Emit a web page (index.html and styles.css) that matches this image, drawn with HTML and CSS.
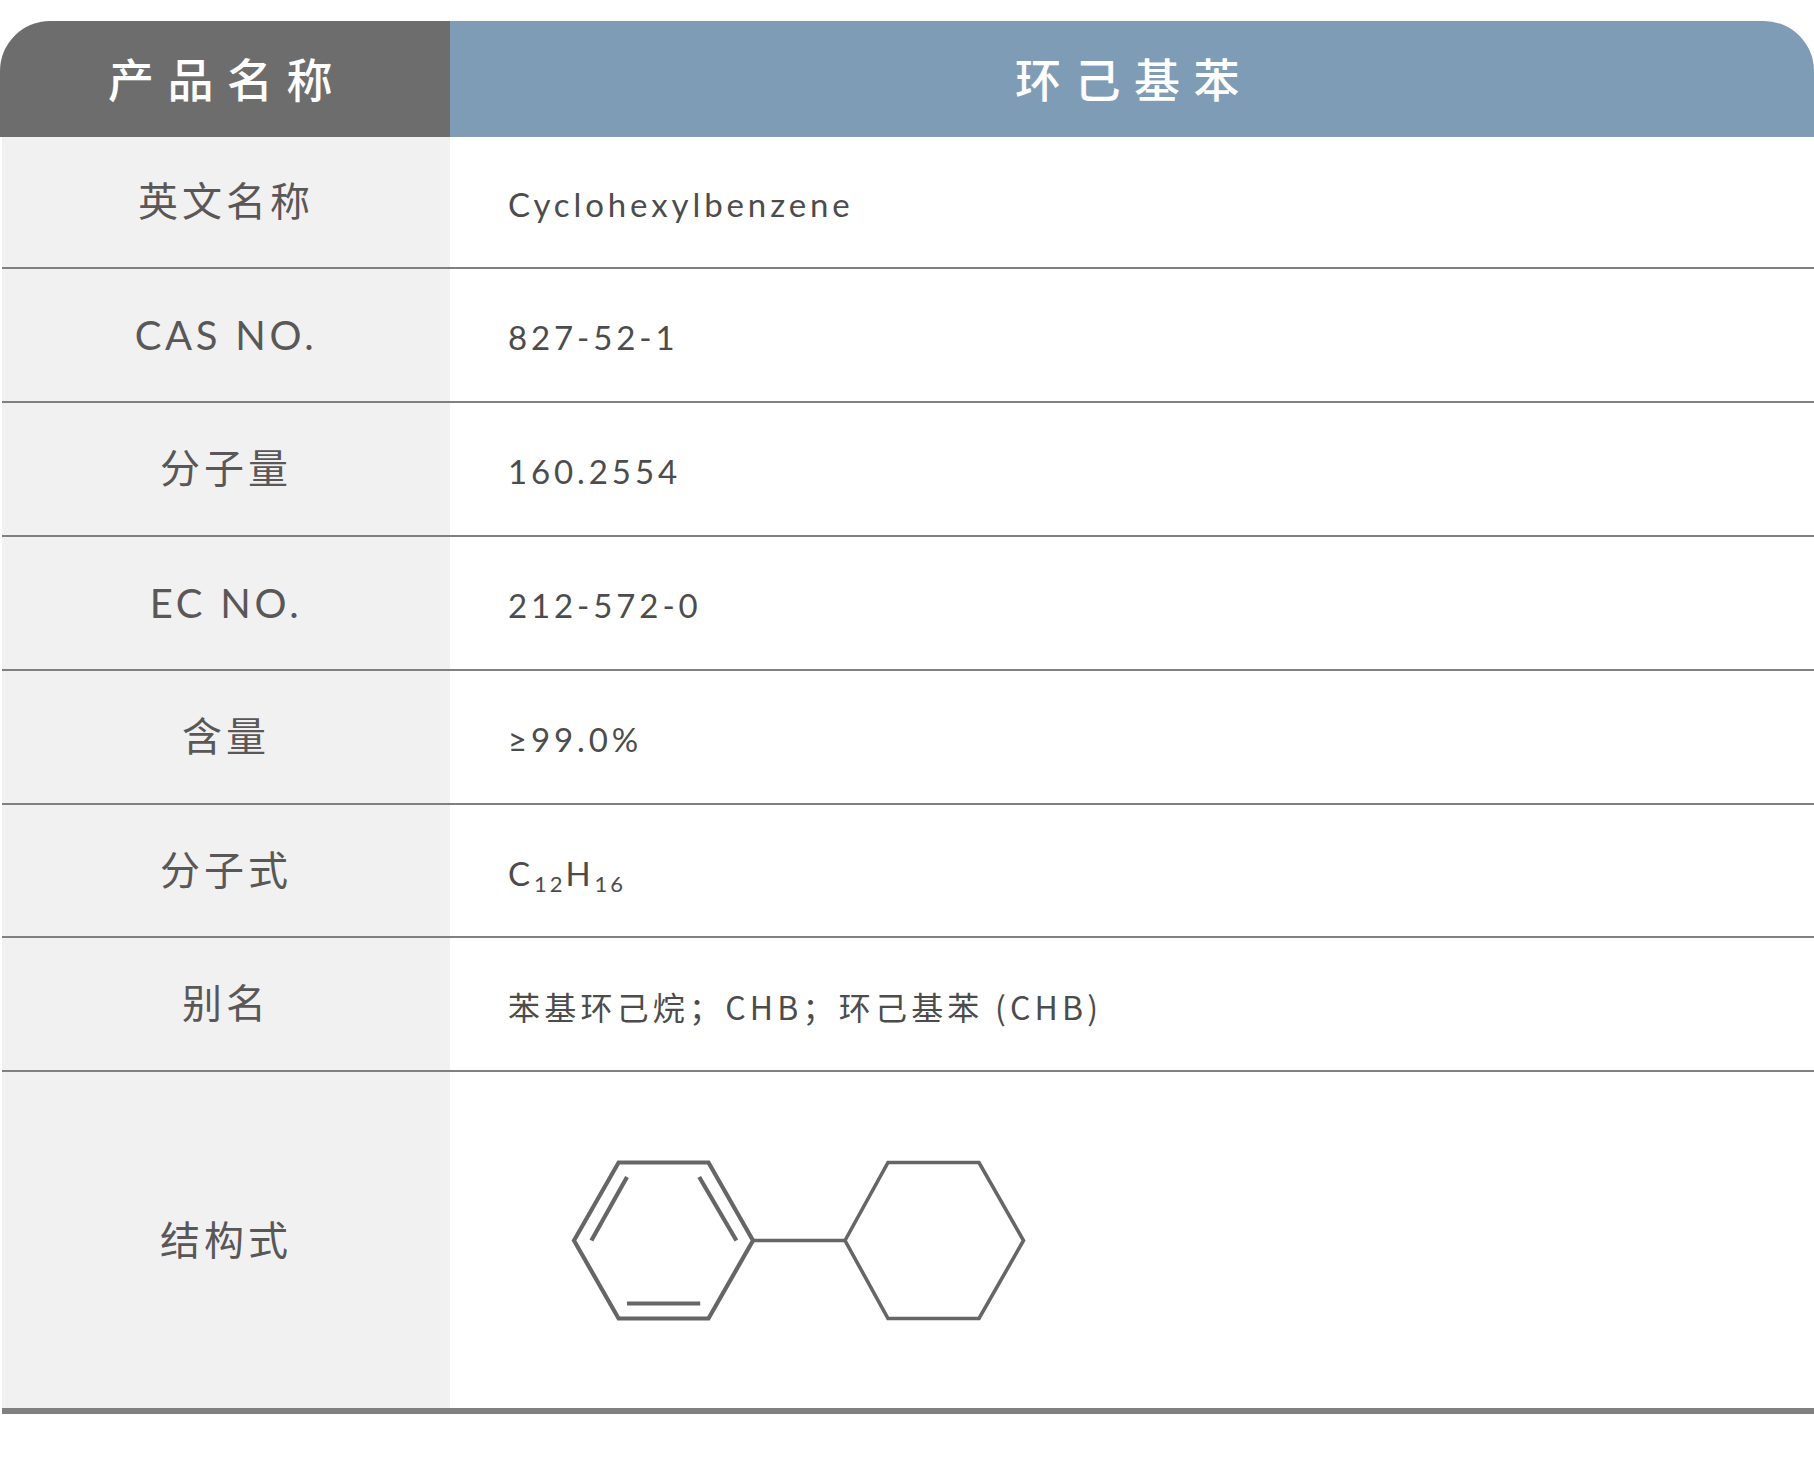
FILE: index.html
```html
<!DOCTYPE html>
<html lang="zh-CN">
<head>
<meta charset="utf-8">
<title>环己基苯</title>
<link rel="stylesheet" href="styles.css">
</head>
<body>
<main class="sheet">
  <header class="head">
    <div class="head-label">产品名称</div>
    <div class="head-value">环己基苯</div>
  </header>
  <div class="row row-first"><div class="label">英文名称</div><div class="value">Cyclohexylbenzene</div></div>
  <div class="row"><div class="label label-latin">CAS NO.</div><div class="value">827-52-1</div></div>
  <div class="row"><div class="label">分子量</div><div class="value">160.2554</div></div>
  <div class="row"><div class="label label-latin">EC NO.</div><div class="value">212-572-0</div></div>
  <div class="row"><div class="label">含量</div><div class="value">≥99.0%</div></div>
  <div class="row"><div class="label">分子式</div><div class="value">C<sub class="sub">12</sub>H<sub class="sub">16</sub></div></div>
  <div class="row"><div class="label">别名</div><div class="value value-alias">苯基环己烷；CHB；环己基苯 (CHB)</div></div>
  <div class="row row-structure">
    <div class="label label-structure">结构式</div>
    <div class="value-structure">
      <svg class="molecule" viewBox="570 1156 456 170" width="456" height="170" role="img" aria-label="环己基苯结构式">
        <g class="benzene">
          <polygon points="574,1240.5 618.6,1162.5 708.5,1162.5 753,1240.5 708.5,1318.5 618.6,1318.5"/>
          <line x1="627" y1="1177" x2="591.4" y2="1240.5"/>
          <line x1="699.2" y1="1177" x2="736.4" y2="1240.5"/>
          <line x1="627" y1="1303.5" x2="700.2" y2="1303.5"/>
        </g>
        <line class="bond" x1="753" y1="1240.5" x2="845" y2="1240.5"/>
        <polygon class="ring" points="845,1240.5 888,1162.5 979,1162.5 1023.5,1240.5 979,1318.5 888,1318.5"/>
      </svg>
    </div>
  </div>
</main>
</body>
</html>
```
FILE: styles.css
```css
* { box-sizing: border-box; }
html, body { margin: 0; padding: 0; background: #fff; }
body {
  font-family: "Noto Sans CJK SC", sans-serif;
  color: #595757;
}
.sheet {
  width: 1814px;
  height: 1462px;
  padding-top: 21px;
  display: flex;
  flex-direction: column;
}
.head {
  display: flex;
  height: 116px;
  color: #fff;
  font-size: 46px;
  font-weight: 500;
  letter-spacing: 13.5px;
  border-radius: 50px 50px 0 0;
  overflow: hidden;
}
.head-label, .head-value {
  display: flex;
  align-items: center;
  justify-content: center;
  padding: 0 0 4px 4px;
}
.head-label { width: 450px; background: #6d6d6d; }
.head-value { flex: 1; background: #7f9cb6; }
.row {
  display: flex;
  height: 133.9px;
  margin-left: 2px;
  border-bottom: 2px solid #808080;
}
.row-first { height: 132px; }
.row-structure {
  height: 342px;
  border-bottom-width: 6px;
}
.label {
  width: 448px;
  background: #f1f1f1;
  display: flex;
  align-items: center;
  justify-content: center;
  font-size: 40px;
  letter-spacing: 4px;
  padding-bottom: 6px;
}
.label-latin {
  font-family: "Lato", "Noto Sans CJK SC", sans-serif;
  letter-spacing: 3.7px;
  padding-bottom: 0;
}
.label-structure { padding-bottom: 4px; }
.value {
  flex: 1;
  display: flex;
  align-items: center;
  padding: 4px 0 0 58px;
  font-family: "Lato", "Noto Sans CJK SC", sans-serif;
  font-size: 33px;
  letter-spacing: 3.9px;
  color: #4c4c4c;
  white-space: pre;
}
.value-alias {
  font-family: "Noto Sans CJK SC", sans-serif;
  font-size: 32px;
  letter-spacing: 4.2px;
  padding-top: 4px;
}
.sub {
  font-size: 22px;
  letter-spacing: 3px;
  align-self: center;
  padding-top: 22px;
  line-height: 1;
}
.value-structure {
  flex: 1;
  display: flex;
  align-items: center;
  padding: 2px 0 0 120px;
}
.molecule { display: block; flex: none; }
.benzene polygon, .benzene line { fill: none; stroke: #666; stroke-width: 4.2; }
.bond { stroke: #666; stroke-width: 3.6; }
.ring { fill: none; stroke: #666; stroke-width: 3.6; }
```
